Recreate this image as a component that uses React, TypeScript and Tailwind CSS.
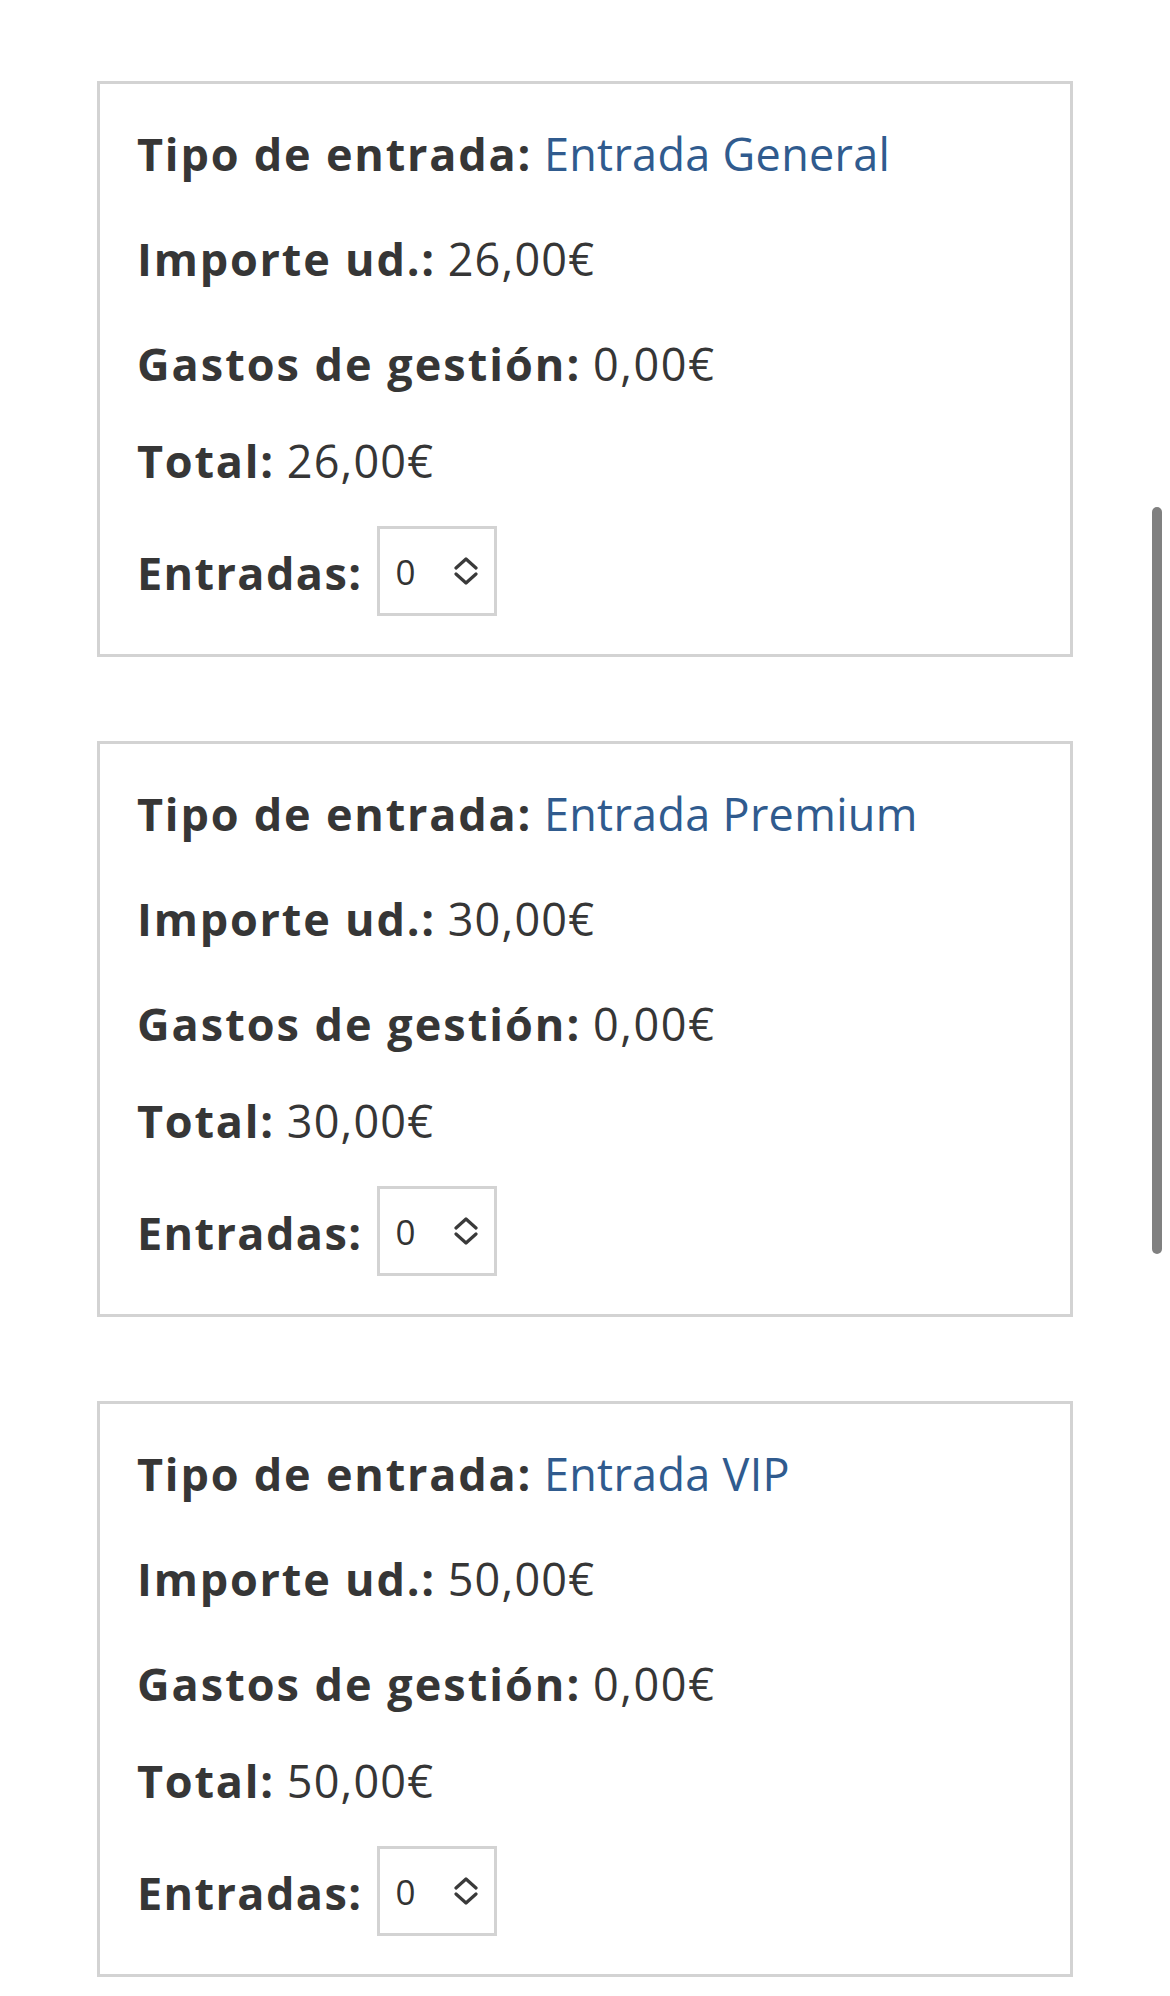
import React from 'react'

const tickets = [
  { name: 'Entrada General', price: '26,00€', fee: '0,00€', total: '26,00€' },
  { name: 'Entrada Premium', price: '30,00€', fee: '0,00€', total: '30,00€' },
  { name: 'Entrada VIP', price: '50,00€', fee: '0,00€', total: '50,00€' },
]

function Chevrons() {
  return (
    <svg width="24" height="28" viewBox="0 0 24 28" fill="none" stroke="#3a3a3a" strokeWidth="3.2" strokeLinecap="round" strokeLinejoin="round">
      <path d="M2 11 L12 2 L22 11" />
      <path d="M2 17 L12 26 L22 17" />
    </svg>
  )
}

function TicketCard({ t }: { t: (typeof tickets)[number] }) {
  return (
    <div className="border-[3px] border-[#d3d3d3] bg-white pt-[40px] pb-[38px] pl-[37px] text-[45px] leading-[60px] text-[#363636]">
      <p>
        <span className="font-bold tracking-[1.8px]">Tipo de entrada:</span>{' '}
        <span className="text-[#305b8e] tracking-[0.3px]">{t.name}</span>
      </p>
      <p className="mt-[45px]">
        <span className="font-bold tracking-[1.8px]">Importe ud.:</span>{' '}
        <span className="tracking-[1.2px]">{t.price}</span>
      </p>
      <p className="mt-[45px]">
        <span className="font-bold tracking-[2px]">Gastos de gestión:</span>{' '}
        <span className="tracking-[1.6px]">{t.fee}</span>
      </p>
      <p className="mt-[37px]">
        <span className="font-bold tracking-[1.8px]">Total:</span>{' '}
        <span className="tracking-[1.2px]">{t.total}</span>
      </p>
      <div className="mt-[35px] flex h-[90px] items-center gap-[15px]">
        <span className="font-bold tracking-[1.4px] translate-y-[2px]">Entradas:</span>
        <div className="flex h-[90px] w-[120px] items-center justify-between border-[3px] border-[#d3d3d3] pl-[15px] pr-[16px]">
          <span className="text-[35px] leading-none text-[#333]">0</span>
          <Chevrons />
        </div>
      </div>
    </div>
  )
}

export default function App() {
  return (
    <div className="relative min-h-[1996px] bg-white font-['Open_Sans',sans-serif]">
      <div className="flex flex-col gap-[84px] px-[97px] pt-[81px] pb-[16px]">
        {tickets.map((t) => (
          <TicketCard key={t.name} t={t} />
        ))}
      </div>
      {/* overlay scrollbar */}
      <div className="absolute left-[1152px] top-[507px] h-[747px] w-[10px] rounded-full bg-[#808080]" />
    </div>
  )
}
